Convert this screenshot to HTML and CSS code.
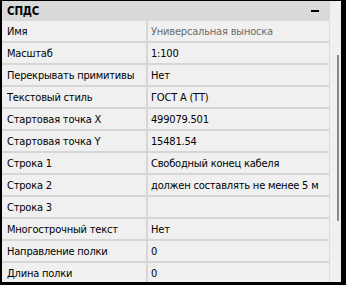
FILE: index.html
```html
<!DOCTYPE html>
<html lang="ru">
<head>
    <meta charset="UTF-8">
    <title>Свойства СПДС</title>
    <link rel="stylesheet" href="styles.css">
</head>
<body>
    <div class="panel">
        <div class="main">
            <div class="header">
                <span class="title">СПДС</span>
                <span class="collapse"></span>
            </div>
            <div class="row"><div class="label">Имя</div><div class="value value-muted">Универсальная выноска</div></div>
            <div class="row"><div class="label">Масштаб</div><div class="value">1:100</div></div>
            <div class="row"><div class="label">Перекрывать примитивы</div><div class="value">Нет</div></div>
            <div class="row"><div class="label">Текстовый стиль</div><div class="value">ГОСТ А (ТТ)</div></div>
            <div class="row"><div class="label">Стартовая точка X</div><div class="value">499079.501</div></div>
            <div class="row"><div class="label">Стартовая точка Y</div><div class="value">15481.54</div></div>
            <div class="row"><div class="label">Строка 1</div><div class="value">Свободный конец кабеля</div></div>
            <div class="row"><div class="label">Строка 2</div><div class="value">должен составлять не менее 5 м</div></div>
            <div class="row"><div class="label">Строка 3</div><div class="value"></div></div>
            <div class="row"><div class="label">Многострочный текст</div><div class="value">Нет</div></div>
            <div class="row"><div class="label">Направление полки</div><div class="value">0</div></div>
            <div class="row"><div class="label">Длина полки</div><div class="value">0</div></div>
        </div>
        <div class="scroll">
            <div class="thumb"></div>
        </div>
    </div>
</body>
</html>
```
FILE: styles.css
```css
body {
    margin: 0;
    background-color: #000;
    font-family: "DejaVu Sans Condensed", "DejaVu Sans", sans-serif;
    font-size: 11px;
    letter-spacing: -0.2px;
    color: #000;
}
.panel {
    display: flex;
    height: 281px;
    margin: 1px 5px 3px 2px;
    background-color: #f0f0f0;
    overflow: hidden;
}
.main {
    width: 327px;
    flex-shrink: 0;
}
.header {
    display: flex;
    align-items: center;
    justify-content: space-between;
    height: 20px;
    padding: 0 10px 0 5px;
    background-color: #dadada;
}
.title {
    font-weight: bold;
    font-size: 11.5px;
}
.collapse {
    width: 8px;
    height: 2px;
    background-color: #000;
}
.row {
    display: grid;
    grid-template-columns: 146px 1fr;
    height: 20px;
    line-height: 21px;
    border-bottom: 2px solid #d6d6d6;
}
.label {
    padding-left: 5px;
    border-right: 2px solid #d6d6d6;
    white-space: nowrap;
    overflow: hidden;
}
.value {
    padding-left: 3px;
    white-space: nowrap;
    overflow: hidden;
}
.value-muted {
    color: #6d6d6d;
}
.scroll {
    flex: 1;
    border-left: 1px solid #dcdcdc;
    padding-top: 54px;
    padding-left: 7px;
}
.thumb {
    width: 2px;
    height: 166px;
    background-color: #8a8a8a;
}
```
